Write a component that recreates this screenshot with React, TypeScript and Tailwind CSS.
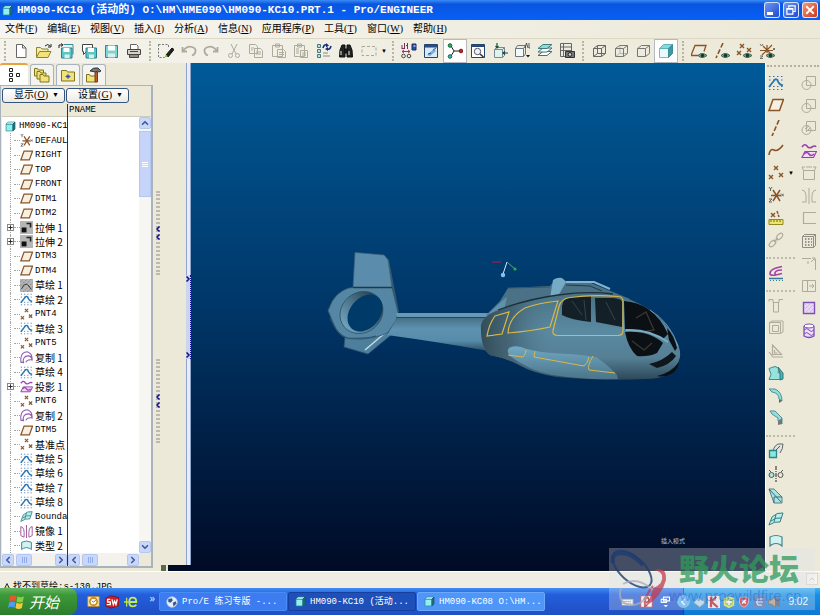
import type { ReactNode } from 'react';
import { ChevronDown, ChevronLeft, ChevronRight, ChevronUp } from 'lucide-react';

/* ---------- icons ---------- */

function Ico({ children, className = 'size-4' }: { children: ReactNode; className?: string }) {
  return (
    <svg viewBox="0 0 16 16" className={`${className} shrink-0`} fill="none" stroke="#444" strokeWidth="1" aria-hidden="true">
      {children}
    </svg>
  );
}

const GREY = '#aeab9c';
const BROWN = '#8a5426';

const Eye = () => (
  <g>
    <path d="M7 12.5q4-4 9 0q-5 4-9 0z" fill="#7fa893" stroke="#3f5f50" />
    <circle cx="11.5" cy="12.5" r="1.8" fill="#123a2c" stroke="none" />
  </g>
);
const Cross = ({ x, y, c = BROWN }: { x: number; y: number; c?: string }) => (
  <path d={`M${x - 2} ${y - 2}l4 4m0-4l-4 4`} stroke={c} strokeWidth="1.4" />
);
const Floppy = ({ x = 0, y = 0 }: { x?: number; y?: number }) => (
  <g transform={`translate(${x} ${y})`}>
    <path d="M.5.5h10.500v10H.5z" fill="#5cc6c6" stroke="#2f7f86" />
    <path d="M2.500.5h6v4h-6z" fill="#fff" stroke="none" />
    <path d="M3.500 7h5v3.500h-5z" fill="#d8eef0" stroke="none" />
  </g>
);
const FolderShape = ({ x = 0, y = 0 }: { x?: number; y?: number }) => (
  <path transform={`translate(${x} ${y})`} d="M.5 1.500h3l1 1.500h5v6h-9z" fill="#f1e27a" stroke="#7d741f" />
);

const icons: Record<string, ReactNode> = {
  new: <path d="M3.500 1.500h6l3.500 3.500v9.500h-9.500zM9.500 1.500v3.500h3.500" fill="#fff" stroke="#666" />,
  open: <><path d="M.5 14V4.500h4l1.500 1.500h6v3" fill="#f6ecab" stroke="#8d8430" /><path d="M.5 14.500l3-6h11.500l-3 6z" fill="#f1e27a" stroke="#8d8430" /><path d="M9 3q3-3 5 0m1-2v3h-3" stroke="#222" /></>,
  openSession: <><path d="M5.500 1.500h9.500v10" fill="#dff3f4" stroke="#3a8c92" /><Floppy x={3} y={4.5} /><path d="M1 5V2h3M3 .5L5 2L3 3.500" stroke="#222" /></>,
  saveCopy: <><path d="M1.500 1.500h10v7h-6l-3 3v-3h-1z" fill="#fff" stroke="#444" /><Floppy x={4.5} y={4.5} /></>,
  save: <><path d="M2.500 2.500h12v12h-12z" fill="#7fd3d3" stroke="#2f8a90" /><path d="M5 2.500h7v5H5z" fill="#fff" stroke="none" /><path d="M5 10.500h7v4H5z" fill="#d8eef0" stroke="none" /></>,
  print: <><path d="M4.500 6V1.500h6l1.500 1.500v3" fill="#fff" stroke="#666" /><path d="M1.500 6.500h13v5h-13z" fill="#d5d2c4" /><path d="M3.500 11.500h9v3h-9z" fill="#8f8d84" /><path d="M4 8.500h8" /></>,
  edit: <><path d="M.5 1.500h10v3M.5 1.500v13h6" strokeDasharray="2 1.500" stroke="#777" /><path d="M8 12l6-7l2 1.500l-6 7.500z" fill="#222" stroke="#111" /><path d="M6.500 14.500l1.500-3l2 2z" fill="#7fc31c" stroke="none" /></>,
  undo: <path d="M1.500 4v4.500h4.500M2 8q4-5.500 9-4t3 6q-1 2-3 2.500" stroke={GREY} strokeWidth="1.800" />,
  redo: <path d="M14.500 4v4.500h-4.500M14 8q-4-5.500-9-4t-3 6q1 2 3 2.500" stroke={GREY} strokeWidth="1.800" />,
  cut: <g stroke={GREY}><path d="M5 1l5 10M11 1l-5 10" /><circle cx="4.500" cy="12.500" r="2" /><circle cx="11.500" cy="12.500" r="2" /></g>,
  copy: <g stroke={GREY}><path d="M1.500 1.500h6l2 2v7h-8zM6.500 5.500h6l2 2v7h-8zM3 5h3M3 7h2M8 9h5M8 11h5" /></g>,
  paste: <g stroke={GREY}><path d="M1.500 2.500h10v11h-10zM4.500 1h4v3h-4zM6.500 6.500h6l2 2v6h-8zM8 9.500h5M8 11.500h5" /></g>,
  pasteSpecial: <g stroke={GREY}><path d="M1.500 2.500h10v11h-10zM4.500 1h4v3h-4zM7.500 7.500h7v7h-7zM9 10h4M9 12h4" /><path d="M3 6h3M3 8h3M3 10h3" /></g>,
  regen: <><path d="M1.500 1.500h3v3h-3zM1.500 6.500h3v3h-3zM1.500 11.500h3v3h-3z" fill="#bfe0e0" stroke="#47777d" /><path d="M7 13h7M7 10h5" stroke="#888" /><path d="M7 5q1-4 4-3M15 3q-1 4-4 3" stroke="#1c2d80" strokeWidth="1.600" /><path d="M10 0l3 2.500l-3 2zM12 4l-3 2l3 2z" fill="#1c2d80" stroke="none" /></>,
  find: <><path d="M2 7l2-5h3v12H1.500zM14 7l-2-5H9v12h5.500zM6.500 6h3v4h-3z" fill="#222" stroke="#111" /><path d="M3 8v4M11 8v4" stroke="#a9a99a" strokeWidth="1.500" /></>,
  select: <path d="M1 3.500h14v9H1z" stroke="#aaa796" strokeDasharray="3 2" />,
  dims: <><path d="M1 2v4M3.500 0v6M1 5.500h2.500M5 2.500h1.500M6.500 0v6" stroke="#7b2f5c" /><path d="M1 8.500h8M3 7l-2 1.500L3 10M7 7l2 1.500L7 10" stroke="#a3326f" /><circle cx="2.500" cy="13" r="1.800" /><circle cx="8" cy="13" r="1.800" /><path d="M11 1h4v6h-4z" fill="#2b4da0" stroke="#15306e" /><path d="M12.500 3h2" stroke="#fff" /></>,
  repaint: <><path d="M1.500 1.500h13v13h-13z" fill="#dbe9f9" stroke="#24456f" /><path d="M1.500 2h13v2h-13z" fill="#2c5b9c" stroke="#24456f" /><path d="M4 12l7-6l2 2l-6 5z" fill="#79aee2" stroke="none" /><path d="M5 11l3-1M10 7l3-2" stroke="#274e86" /></>,
  spin: <><path d="M4 3l3 5l-3 5M7 8h6" stroke="#222" /><circle cx="3" cy="2.500" r="1.800" fill="#2fae60" stroke="#146433" /><circle cx="3" cy="13.500" r="1.800" fill="#37b7a7" stroke="#146460" /><circle cx="14" cy="8" r="1.800" fill="#c92626" stroke="#801010" /></>,
  orient: <><path d="M1.500 1.500h13v13h-13z" fill="#fff" stroke="#24456f" /><path d="M1.500 2h13v1.500h-13z" fill="#2c5b9c" stroke="#24456f" /><circle cx="7.500" cy="8.500" r="3.200" fill="#eef4f7" stroke="#556" /><path d="M10 11l3.500 3" stroke="#333" strokeWidth="1.600" /></>,
  refit: <><path d="M2.500 6.500h8v8h-8z" fill="#dff3ee" stroke="#789" /><path d="M2.500 6.500l2-2h8l-2 2M12.500 4.500v8l-2 2" stroke="#789" /><path d="M5 0v5M3.500 3L5 5l1.500-2M16 10h-5M13 8.500L11 10l2 1.500" stroke="#14513a" strokeWidth="1.200" /></>,
  views: <><path d="M1.500 5.500h8v8h-8z" fill="#f5faf6" stroke="#678" /><path d="M1.500 5.500l2-3h8l-2 3M11.500 3v8l-2 2.500" stroke="#678" /><path d="M11 5l1.500-5l1.500 5M15 0v5h2" stroke="#333" strokeWidth=".8" /><path d="M12 12h4l-2 2.500z" fill="#111" stroke="none" /></>,
  layers: <><path d="M1 12.500h9l5-4h-9z" fill="#fff" stroke="#4b6f70" /><path d="M1 9h9l5-4h-9z" fill="#fff" stroke="#4b6f70" /><path d="M1 5.500h9l5-4h-9z" fill="#8fdcd6" stroke="#3a7f7d" /></>,
  viewMgr: <><path d="M1.500.5h11v13h-11zM4.500.5v13M1.500 4h11M1.500 7.500h11" stroke="#666" /><path d="M6.500 8.500h9v6h-9z" fill="#777" stroke="#333" /><circle cx="11" cy="11.500" r="1.800" fill="#ddd" stroke="#222" /></>,
  wire: <path d="M2.500 5.500h8v8h-8zM6.500 2.500h8v8h-8zM2.500 5.500l4-3M10.500 5.500l4-3M2.500 13.500l4-3M10.500 13.500l4-3" stroke="#666" />,
  hidden: <><path d="M7 3v7.500h7M6.500 10.500l-4 3" stroke="#b5b3a6" /><path d="M2.500 5.500h8v8h-8zM2.500 5.500l4-3h8v8l-4 3M10.500 5.500l4-3" stroke="#777" /></>,
  noHidden: <path d="M2.500 5.500h8v8h-8zM2.500 5.500l4-3h8v8l-4 3M10.500 5.500l4-3" stroke="#777" />,
  shade: <><path d="M1.500 5.500h9v9h-9z" fill="#e8fbfa" stroke="#7fb9bb" /><path d="M1.500 5.500l4-4h9l-4 4z" fill="#7fdde0" stroke="#5fb5ba" /><path d="M10.500 5.500l4-4v9l-4 4z" fill="#3b9aa5" stroke="#3b8d99" /></>,
  planeEye: <><path d="M0 12.500l4-10h11l-2 6M0 12.500h7" stroke={BROWN} strokeWidth="1.300" /><Eye /></>,
  axisEye: <><path d="M9 0L2 15" stroke={BROWN} strokeWidth="1.600" strokeDasharray="5 2" /><Eye /></>,
  pointEye: <><Cross x={6} y={3} /><Cross x={3} y={10} /><Cross x={13} y={7} /><Eye /></>,
  csysEye: <><path d="M4 3l9 9M13 2L3 12M1 7.500h13M8 2v8" stroke={BROWN} strokeWidth="1.200" /><path d="M1 1l1.500 2L4 1M14 5l2 2m0-2l-2 2M1 13h3l-3 2.500h3" stroke="#555" strokeWidth=".8" /><Eye /></>,
  sketch: <><path d="M1 1.500h14M1 5h14M1 11.500h14M1 14.500h14" stroke="#3b6fb5" strokeDasharray="1.500 2.500" /><path d="M1 12L7 4.500q2-1 3 2t5 4" stroke="#2b78b4" strokeWidth="1.800" /></>,
  plane: <path d="M1 13.500L5 2.500h10.500l-4 11z" stroke={BROWN} strokeWidth="1.500" fill="#f6f0e2" />,
  axis: <path d="M11 0L4 16" stroke={BROWN} strokeWidth="1.600" strokeDasharray="5 2" />,
  curve: <path d="M1 13q1-7 5-5t9-5" stroke={BROWN} strokeWidth="1.600" />,
  points: <><Cross x={8} y={3} /><Cross x={3} y={12} /><Cross x={13} y={10} /></>,
  csys: <><path d="M5 3l7 11M12 3L5 14M3 8.500h10" stroke={BROWN} strokeWidth="1.500" /><path d="M1 0l1.500 2L4 0M2.500 2v2M13 6.500l3 3m0-3l-3 3M1 12h3l-3 3h3" stroke="#555" strokeWidth=".9" /></>,
  analysis: <><path d="M1 9.500h14v5H1z" fill="#eee46a" stroke="#8f8a22" /><path d="M3 10v2M6 10v2M9 10v2M12 10v2" stroke="#6d6a10" /><Cross x={5} y={5} /><path d="M9 1l2 6" stroke={BROWN} strokeWidth="1.500" strokeDasharray="3 1" /></>,
  link: <g stroke={GREY} strokeWidth="1.200"><ellipse cx="4.500" cy="11.500" rx="4" ry="2.200" transform="rotate(-45 4.500 11.500)" /><ellipse cx="11.500" cy="4.500" rx="4" ry="2.200" transform="rotate(-45 11.500 4.500)" /><path d="M6 10l4-4" /></g>,
  style: <><path d="M14 1.500L8 3Q2 5 2 8.500t12 0M14 5Q6 5 7 9.500" stroke="#a544a8" strokeWidth="1.700" /><path d="M1 13.500h14" stroke="#33799a" strokeWidth="1.500" /><path d="M2 15.500h13" stroke="#33799a" strokeDasharray="1 2" /></>,
  tee: <path d="M1 1.500h4v3h6v-3h4M5.500 5v9h5V5M1 1.500v2" stroke={GREY} />,
  shell: <path d="M1.500 2.500h11v11h-11zM4.500 5.500h6v6h-6zM1.500 2.500L4 1h11v11l-2.500 1.500" stroke={GREY} />,
  rib: <path d="M4.500 2v9.500h9zM1 9l4 5h10M6.500 7v3h3" stroke={GREY} strokeWidth="1.200" />,
  draft: <><path d="M1 3.500l6-2q5 1 3 6l3 1v6H1l2-5z" fill="#98e2de" stroke="#3e8d8f" /><path d="M10 2l5 6v6l-3 1V8z" fill="#3fb7b3" stroke="#37777b" /></>,
  round: <><path d="M1 1h6q7 3 7 12l-3-2q0-6-7-7z" fill="#8fe0df" stroke="#4f9294" /><path d="M14 13l-3-2v4z" fill="#666" stroke="none" /></>,
  chamfer: <><path d="M2 1h5l7 7v6l-4-3V8L4 4z" fill="#8fe0df" stroke="#5b8d8d" /><path d="M14 8l-4 3v4l4-1z" fill="#777" stroke="none" /></>,
  extrude: <><path d="M5 7q2-5 5-6h5q0 5-3 9" fill="#dfe5e2" stroke="#666" /><path d="M1.500 7.500h7v7h-7z" fill="#8be6e2" stroke="#2c8588" strokeWidth="1.300" /><path d="M8 7l4-4" stroke="#a33" /></>,
  mirror: <><path d="M8 0v16" stroke="#222" strokeDasharray="4 1 1 1" /><circle cx="3.500" cy="9" r="2.500" fill="#a6e6e2" stroke="#555" /><circle cx="12.500" cy="9" r="2.500" stroke="#555" /><path d="M3 6L1 4M13 6l2-2" stroke="#555" /></>,
  sweep: <><path d="M1 1h5l8 8v6H6z" fill="#a9e5e0" stroke="#54808a" /><path d="M1 1l12 13M6 15V9h8" stroke="#3d6a80" /></>,
  boundary: <><path d="M1 14l3-8q5-5 11-4l-3 9q-5-1-11 3z" fill="#b7f0ec" stroke="#3a7c80" /><path d="M8 3.500L6 11M3 10q5-4 10-3" stroke="#3a7c80" /></>,
  surface: <path d="M2 13V4q6-3 12 0v9l-2-1.500q-4-2-8 0z" fill="#cdf3f3" stroke="#4a8290" strokeWidth="1.200" />,
  merge: <g stroke={GREY}><circle cx="5.500" cy="10" r="4.500" /><path d="M5.500 1.500h9v9h-9z" /></g>,
  merge2: <g stroke={GREY}><circle cx="5.500" cy="10" r="4.500" /><path d="M5.500 1.500h9v9h-9zM4 9l4-3M5 12l4-4" /></g>,
  project: <><path d="M1 14.500l3-6h11.500l-3 6z" fill="#f1dcf4" stroke="#9a3fb0" strokeWidth="1.200" /><path d="M1 4q3-4 5-1t5 1t4 0M3 11q3-3 5 0t5 0" stroke="#9a3fb0" strokeWidth="1.600" /></>,
  trim: <path d="M2.500 5.500h11v9h-11zM2.500 5.500L1 2h3M13.500 5.500L15 2h-3M5 2h6" stroke={GREY} />,
  mirrorGrey: <path d="M8 0v16M1 2q5 0 4 12H1M15 2q-5 0-4 12h4" stroke={GREY} />,
  corner: <path d="M15 2.500H2.500v11H15" stroke={GREY} strokeWidth="1.200" />,
  pattern: <><path d="M1.500 3.500l2-2h11v11l-2 2h-11zM1.500 3.500h11v11M12.500 3.500l2-2" stroke="#8f8d82" /><path d="M4 6h1.500M7 6h1.500M10 6h1M4 9h1.500M7 9h1.500M10 9h1M4 12h1.500M7 12h1.500M10 12h1" stroke="#777" strokeWidth="1.500" /></>,
  extend: <path d="M1 3.500h9M14.500 4v11M10 7l4-4M11 3h3v3M7 6v3" stroke={GREY} />,
  offset: <path d="M1.500 2.500h13v11h-13zM6.500 2.500v11M8 8h5M11 6l2 2l-2 2" stroke={GREY} />,
  fill: <><path d="M2.500 2.500h11v11h-11z" fill="#e9d7f7" stroke="#7b4fb5" strokeWidth="1.400" /><path d="M3 6l3-3M3 10l7-7M4 13l9-9M8 13l5-5" stroke="#d3b8ea" /></>,
  cylinder: <><path d="M3 3v10q5 3 10 0V3" fill="#eedcf8" stroke="#7b4fb5" strokeWidth="1.300" /><ellipse cx="8" cy="3" rx="5" ry="2" fill="#fff" stroke="#7b4fb5" /><path d="M3 7q3-3 5 0t5 0M3 11q3-3 5 0t5 0" stroke="#7b4fb5" /></>,
  cube: <><path d="M1.500 4.500h10v10h-10z" fill="#8ff0f0" stroke="#2b8a90" /><path d="M1.500 4.500l3-3h10l-3 3z" fill="#d5ffff" stroke="#2b8a90" /><path d="M11.500 4.500l3-3v10l-3 3z" fill="#1f7880" stroke="#145057" /></>,
  feature: <><path d="M0 0h16v16H0z" fill="#b5b5b5" stroke="none" /><path d="M2 8h6v6H2z" fill="#111" stroke="none" /><path d="M8 3h5v5" stroke="#222" strokeWidth="2" /></>,
  sketchGrey: <><path d="M0 0h16v16H0z" fill="#b5b5b5" stroke="none" /><path d="M0 4l4-4M0 9l9-9M0 14l14-14M4 16l12-12M9 16l7-7" stroke="#666" strokeDasharray="1.500 1.500" /><path d="M2 12q5-12 12 1" stroke="#222" /></>,
  copySurf: <path d="M1 14V9q1-8 8-8q6 2 6 9M4 15q-1-9 6-9q4 0 5 5q-6-1-8 3M1 14h4" stroke="#8f5bb0" strokeWidth="1.300" />,
  mirrorPurple: <path d="M8 0v16M1 2q5 0 4 13l-4-2zM15 2q-5 0-4 13l4-2z" stroke="#a05a9c" strokeWidth="1.200" />,
  treeTab: <path d="M3.500 1.500h3v3h-3zM3.500 6.500h3v3h-3zM3.500 11.500h3v3h-3zM10.500 6.500h3v3h-3z" stroke="#222" fill="#fff" />,
  foldersTab: <><FolderShape x={0} y={0} /><FolderShape x={2.5} y={3} /><FolderShape x={5.5} y={6} /></>,
  favTab: <><path d="M1.500 3.500h5l1 1.500h7v9h-13z" fill="#f1e27a" stroke="#7d741f" /><path d="M8 7v5M5.500 9.500h5M6.500 8l3 3M9.500 8l-3 3" stroke="#24389c" strokeWidth=".8" /></>,
  toolsTab: <><FolderShape x={0} y={6} /><path d="M4 4q3-4 8-3l3 3l-2 1l-2-1l-1 1z" fill="#6f7c86" stroke="#333" /><path d="M9 5v10h2.500V5z" fill="#b5622d" stroke="#7a3c15" /></>,
};

/* ---------- data ---------- */

const MENUS = [
  ['文件', 'F'], ['编辑', 'E'], ['视图', 'V'], ['插入', 'I'], ['分析', 'A'],
  ['信息', 'N'], ['应用程序', 'P'], ['工具', 'T'], ['窗口', 'W'], ['帮助', 'H'],
];

const TREE: [string, string, boolean?][] = [
  ['csys', 'DEFAULT'], ['plane', 'RIGHT'], ['plane', 'TOP'], ['plane', 'FRONT'], ['plane', 'DTM1'], ['plane', 'DTM2'],
  ['feature', '拉伸 1', true], ['feature', '拉伸 2', true], ['plane', 'DTM3'], ['plane', 'DTM4'],
  ['sketchGrey', '草绘 1'], ['sketch', '草绘 2'], ['points', 'PNT4'], ['sketch', '草绘 3'], ['points', 'PNT5'],
  ['copySurf', '复制 1'], ['sketch', '草绘 4'], ['project', '投影 1', true], ['points', 'PNT6'], ['copySurf', '复制 2'],
  ['plane', 'DTM5'], ['points', '基准点'], ['sketch', '草绘 5'], ['sketch', '草绘 6'], ['sketch', '草绘 7'], ['sketch', '草绘 8'],
  ['boundary', 'Boundary'], ['mirrorPurple', '镜像 1'], ['surface', '类型 2'],
];

const COL_A = [
  'sketch', 'plane', 'axis', 'curve', 'points', 'csys', 'analysis', 'link', '-', 'style', '-',
  'tee', 'shell', 'rib', 'draft', 'round', 'chamfer', '-', 'extrude', 'mirror', 'sweep', 'boundary', 'surface',
];
const COL_B = ['merge', 'merge', 'merge2', 'project', 'trim', 'mirrorGrey', 'corner', 'pattern', 'extend', 'offset', 'fill', 'cylinder'];

/* ---------- parts ---------- */

function TitleBar() {
  const btn = 'flex size-4 items-center justify-center rounded-[3px] border border-white/80';
  return (
    <header className="flex h-5 shrink-0 items-center bg-linear-to-b from-[#3a8cf5] via-[#0a55e0] via-20% to-[#0560f8] pr-0.5 pl-0.5 text-white">
      <Ico className="size-[11px]">{icons.cube}</Ico>
      <h1 className="ml-1 flex-1 truncate whitespace-pre font-['Liberation_Mono','Noto_Sans_CJK_SC',monospace] text-[11px] leading-4 font-bold">
        HM090-KC10 (活动的) O:\HM\HME090\HM090-KC10.PRT.1 - Pro/ENGINEER
      </h1>
      <div className="flex gap-[3px]">
        <button aria-label="最小化" className={`${btn} bg-linear-to-br from-[#6f98f2] to-[#1c48cf]`}>
          <span className="mt-1.5 mr-1 h-[3px] w-1.5 bg-white" />
        </button>
        <button aria-label="还原" className={`${btn} bg-linear-to-br from-[#6f98f2] to-[#1c48cf]`}>
          <Ico className="size-3"><path d="M5 5V2.500h8.500V10H11M2.500 6h8v7.500h-8zM2.500 7h8" stroke="#fff" strokeWidth="1.600" /></Ico>
        </button>
        <button aria-label="关闭" className={`${btn} bg-linear-to-br from-[#f0967a] to-[#c9361a]`}>
          <Ico className="size-3"><path d="M3 3l10 10M13 3L3 13" stroke="#fff" strokeWidth="2.400" /></Ico>
        </button>
      </div>
    </header>
  );
}

function MenuBar() {
  return (
    <nav className="flex h-[19px] shrink-0 items-center gap-2.5 border-b border-[#dcd8c4] bg-linear-to-r from-[#f6f5f1] to-[#ece9d8] pl-[5px] font-['Liberation_Serif','Noto_Sans_CJK_SC',serif] text-[10px] leading-4">
      {MENUS.map(([label, key]) => (
        <button key={key} className="shrink-0 whitespace-nowrap">{label}(<u>{key}</u>)</button>
      ))}
    </nav>
  );
}

const Grip = () => <span className="mx-1 h-5 w-0.5 shrink-0 border-l-2 border-dotted border-[#b9b5a3]" />;

function ToolGroup({ names, active, className }: { names: string[]; active?: string; className: string }) {
  return (
    <div className={`flex h-full shrink-0 ${className}`}>
      {names.map((n) => (
        <button key={n} aria-label={n} className={`flex h-full flex-1 items-center justify-center ${n === active ? 'border border-[#b5b9c4] bg-white' : ''}`}>
          <Ico>{icons[n]}</Ico>
        </button>
      ))}
    </div>
  );
}

function Toolbar() {
  return (
    <div className="flex h-6 shrink-0 items-center bg-linear-to-r from-[#f4f3ec] to-[#ece9d8]">
      <Grip />
      <ToolGroup className="w-[135px]" names={['new', 'open', 'openSession', 'saveCopy', 'save', 'print']} />
      <Grip />
      <ToolGroup className="w-[225px]" names={['edit', 'undo', 'redo', 'cut', 'copy', 'paste', 'pasteSpecial', 'regen', 'find', 'select']} />
      <button aria-label="选取选项" className="w-2 text-[6px] leading-4">▼</button>
      <Grip />
      <ToolGroup className="w-[180px]" active="spin" names={['dims', 'repaint', 'spin', 'orient', 'refit', 'views', 'layers', 'viewMgr']} />
      <Grip />
      <ToolGroup className="w-[90px]" active="shade" names={['wire', 'hidden', 'noHidden', 'shade']} />
      <Grip />
      <ToolGroup className="w-[90px]" names={['planeEye', 'axisEye', 'pointEye', 'csysEye']} />
    </div>
  );
}

const SCROLL_BTN = 'flex size-3 shrink-0 items-center justify-center rounded-[2px] border border-[#b4c7f3] bg-[#c9d7fb] text-[#3f5b93]';

function HScroll({ className }: { className: string }) {
  return (
    <div className={`flex h-[13px] shrink-0 items-center bg-[#f3f2ec] ${className}`}>
      <button aria-label="向左" className={SCROLL_BTN}><ChevronLeft size={10} strokeWidth={4} /></button>
      <span className="ml-0.5 flex h-3 w-4 items-center justify-center gap-px rounded-[2px] border border-[#b4c7f3] bg-[#c9d7fb]">
        <i className="h-1.5 w-px bg-[#8fabec]" /><i className="h-1.5 w-px bg-[#8fabec]" /><i className="h-1.5 w-px bg-[#8fabec]" />
      </span>
      <button aria-label="向右" className={`${SCROLL_BTN} ml-auto`}><ChevronRight size={10} strokeWidth={4} /></button>
    </div>
  );
}

function TreeLabel({ text }: { text: string }) {
  const cjk = /[\u4e00-\u9fff]/.test(text);
  return (
    <span className={cjk
      ? "whitespace-pre font-['Noto_Sans_CJK_SC',sans-serif] text-[10px] leading-[14px]"
      : "whitespace-pre font-['Liberation_Mono',monospace] text-[9px] leading-[14px]"}>
      {text}
    </span>
  );
}

function ModelTree() {
  return (
    <ul className="flex min-h-0 flex-1 flex-col overflow-hidden pt-0.5 text-black">
      <li className="flex min-h-0 flex-1 items-center gap-[3px] pl-[3px]">
        <Ico className="size-[11px]">{icons.cube}</Ico>
        <TreeLabel text="HM090-KC10" />
      </li>
      {TREE.map(([icon, label, open]) => (
        <li key={label} className="ml-2 flex min-h-0 flex-1 items-center border-l border-dotted border-[#a5a5a0]">
          {open ? (
            <button aria-label={`展开 ${label}`} className="-ml-1 flex size-[7px] shrink-0 items-center justify-center border border-[#8a8a8a] bg-white">
              <Ico className="size-[5px]"><path d="M8 1v14M1 8h14" stroke="#222" strokeWidth="3" /></Ico>
            </button>
          ) : <span className="w-[3px] shrink-0" />}
          <span className="w-1.5 shrink-0 border-t border-dotted border-[#a5a5a0]" />
          <Ico className="mr-0.5 size-[13px]">{icons[icon]}</Ico>
          <TreeLabel text={label} />
        </li>
      ))}
    </ul>
  );
}

function Navigator() {
  const tab = 'flex h-[21px] items-center justify-center rounded-t-[3px] border border-b-0 border-[#a9b3bd]';
  const drop = "flex h-[15px] w-[63px] items-center justify-center gap-1 rounded-[3px] border border-[#33557f] bg-linear-to-b from-white to-[#ecebe4] pl-1.5 font-['Liberation_Serif','Noto_Sans_CJK_SC',serif] text-[10px] leading-3 whitespace-nowrap";
  return (
    <aside className="mb-[3px] flex w-[153px] shrink-0 flex-col">
      <div className="flex items-end gap-0.5">
        <button aria-label="模型树" className="flex h-[22px] w-7 items-center justify-center rounded-t-[3px] border-t-2 border-[#e8a33d] bg-white"><Ico>{icons.treeTab}</Ico></button>
        <button aria-label="文件夹" className={`${tab} w-6 bg-[#f4f3ee]`}><Ico>{icons.foldersTab}</Ico></button>
        <button aria-label="收藏夹" className={`${tab} w-6 bg-[#f4f3ee]`}><Ico>{icons.favTab}</Ico></button>
        <button aria-label="工具" className={`${tab} w-6 bg-[#f4f3ee]`}><Ico>{icons.toolsTab}</Ico></button>
      </div>
      <div className="flex min-h-0 flex-1 flex-col border border-r-2 border-b-2 border-[#a9b3bd] pl-px">
        <div className="flex h-[18px] shrink-0 items-center gap-px">
          <button className={drop}><span>显示(<u>O</u>)</span><span className="text-[7px]">▼</span></button>
          <button className={drop}><span>设置(<u>G</u>)</span><span className="text-[7px]">▼</span></button>
        </div>
        <div className="flex min-h-0 flex-1">
          <section className="flex w-[66px] shrink-0 flex-col border-r border-[#26344f] bg-white">
            <div className="h-[13px] shrink-0 border-b border-[#cfccbb] bg-[#ece9d8]" />
            <ModelTree />
            <HScroll className="w-full" />
          </section>
          <section className="flex min-w-0 flex-1 flex-col bg-white">
            <div className="h-[13px] shrink-0 border-b border-[#cfccbb] bg-[#ece9d8] pl-px font-['Liberation_Mono',monospace] text-[9px] leading-3">PNAME</div>
            <div className="flex min-h-0 flex-1 justify-end">
              <div className="flex w-3 flex-col items-center bg-[#f7f6f2]">
                <button aria-label="向上" className={SCROLL_BTN}><ChevronUp size={10} strokeWidth={4} /></button>
                <span className="mt-0.5 flex h-[66px] w-full flex-col items-center justify-center gap-px border border-[#b4c7f3] bg-[#c6d4fa]">
                  <i className="h-px w-1.5 bg-white" /><i className="h-px w-1.5 bg-white" /><i className="h-px w-1.5 bg-white" />
                </span>
                <button aria-label="向下" className={`${SCROLL_BTN} mt-auto`}><ChevronDown size={10} strokeWidth={4} /></button>
              </div>
            </div>
            <div className="flex bg-[#ece9d8]">
              <HScroll className="mr-3 flex-1" />
            </div>
          </section>
        </div>
      </div>
    </aside>
  );
}

function Splitters() {
  return (
    <div className="flex w-[38px] shrink-0 flex-col">
      <div className="flex min-h-0 flex-1 justify-between">
        <div className="ml-[3px] flex flex-col items-center justify-center gap-[84px] pt-1.5">
          {[0, 1].map((i) => (
            <button key={i} aria-label="折叠" className="flex h-[84px] w-1 flex-col items-center justify-center border-x-2 border-dotted border-[#bdb9b0] text-[#10108c]">
              <ChevronLeft size={8} strokeWidth={5} className="shrink-0" />
              <ChevronLeft size={8} strokeWidth={5} className="shrink-0" />
            </button>
          ))}
        </div>
        <div className="flex w-[5px] flex-col items-center justify-center border-x border-[#8fa3cf] bg-[#e8ecf6] pt-1.5">
          <button aria-label="展开" className="flex h-[84px] w-[5px] flex-col items-center justify-between border-r border-dotted border-[#10108c] bg-[#cbd5ee] text-[#10108c]">
            <ChevronRight size={8} strokeWidth={5} className="shrink-0" />
            <ChevronRight size={8} strokeWidth={5} className="shrink-0" />
          </button>
        </div>
      </div>
      <div className="ml-2 flex h-1.5 shrink-0">
        <span className="w-[5px] bg-[#5c6a4c]" />
        <span className="ml-0.5 flex-1 bg-[#000c25]" />
      </div>
    </div>
  );
}

function Helicopter() {
  return (
    <svg viewBox="191 63 574 508" className="h-full w-full" fill="none" role="img" aria-label="HM090-KC10">
      <defs>
        <linearGradient id="body" x1="0" y1="0" x2="0" y2="1">
          <stop offset="0" stopColor="#4a7183" /><stop offset=".45" stopColor="#5a8aa1" /><stop offset=".75" stopColor="#557f95" /><stop offset="1" stopColor="#2c4858" />
        </linearGradient>
        <linearGradient id="rear" x1="0" y1="0" x2="1" y2="0">
          <stop offset="0" stopColor="#2f4650" stopOpacity=".9" /><stop offset=".4" stopColor="#3a5462" stopOpacity=".6" /><stop offset="1" stopColor="#5a8aa1" stopOpacity="0" />
        </linearGradient>
        <linearGradient id="boom" x1="0" y1="0" x2="0" y2="1">
          <stop offset="0" stopColor="#456c82" /><stop offset=".35" stopColor="#5e92b0" /><stop offset=".7" stopColor="#568ba9" /><stop offset="1" stopColor="#2d4e64" />
        </linearGradient>
        <linearGradient id="rim" x1="0" y1="0" x2="1" y2="0">
          <stop offset="0" stopColor="#70a3bd" /><stop offset="1" stopColor="#243f50" />
        </linearGradient>
        <linearGradient id="pod" x1="0" y1="0" x2="0" y2="1">
          <stop offset="0" stopColor="#72a9c3" /><stop offset="1" stopColor="#4a7489" />
        </linearGradient>
      </defs>

      {/* tail */}
      <path d="M384 255l5 5l10 52l-7-2z" fill="#32586d" />
      <path d="M355 252.500l29 2.500l4 5l4 28h-39z" fill="#5b8cab" stroke="#3c637b" strokeWidth=".7" />
      <path d="M345 337l-1 10l24 7l23-19l-6-4z" fill="#4d7f9d" stroke="#30536a" strokeWidth=".8" />
      <path d="M365 350l20-17" stroke="#c4dce8" strokeWidth="1.500" />
      <path d="M353 287.500h39l6 25l-2 8l-8 12q-6 3-14 5q-14 3-26 1q-8-3-13-11l-7-17l4-9q4-7 11-11q5-3 10-3z" fill="#5587a5" stroke="#31576d" strokeWidth=".8" />
      <path d="M353 287.500h39" stroke="#20384a" strokeWidth="1.300" />
      <path d="M330 318l6 11q5 8 12 9q18 1 28-2" stroke="#2e5268" strokeWidth="1.200" />
      <ellipse cx="361.500" cy="312.500" rx="22.500" ry="20" transform="rotate(-40 361.500 312.500)" fill="url(#rim)" stroke="#2e5268" strokeWidth=".8" />
      <ellipse cx="365" cy="313" rx="20.500" ry="15" transform="rotate(-50 365 313)" fill="#003a69" />

      {/* boom */}
      <path d="M397 317h92v34l-6-1q-45-8-96-15l9-15z" fill="url(#boom)" />
      <path d="M396 313h94l10-3v7h-103z" fill="#6699b6" />
      <path d="M397 317.500h92" stroke="#274557" strokeWidth="1.200" />

      {/* cowling */}
      <path d="M486 315l14-14l8-13l42-2l5-6l8-1l6 4h22l17 7l22 9l-60 12z" fill="#4b7186" />
      <path d="M487 315l16-15l4-3l-3 14z" fill="#5f91ad" />
      <path d="M553 280q4-3 9-2l4 4l-8 14l-8 2z" fill="#76abc5" />
      <path d="M566 282h28l16 7" stroke="#86b6cb" strokeWidth="2" />
      <path d="M566 285l24 1l12 5" stroke="#203b4b" strokeWidth="1" />
      <path d="M508 288l42-1" stroke="#35566a" />

      {/* fuselage */}
      <path d="M481 325q2-9 15-14q28-10 62-16q24-3 48-2q22 3 44 17q17 12 25 29q6 9 5 18q-2 11-13 18q-8 4-22 4q-40 2-88-2q-22-3-40-13q-12-6-27-9q-10-7-9-30z" fill="url(#body)" />
      <path d="M481 325q2-9 15-14q28-10 62-16v82q-26-4-41-13q-12-6-27-9q-10-7-9-30z" fill="url(#rear)" />
      <path d="M498 310q30-11 60-15q30-4 55-1" stroke="#1c2f3a" strokeWidth="1.300" />

      {/* sponson */}
      <path d="M509 348q4-3 12-1q10 4 30 6q28 1 45 4q12 8 21 18l1 4q-36 1-66-4q-24-5-42-19q-4-5-1-8z" fill="url(#pod)" />
      <path d="M508 355l15 2q3-3 3-7M535 351l-1 6l50 9q4-3 5-9M593 356q-6 10-4 14l26 3" stroke="#d9b84a" />

      {/* glazing */}
      <path d="M562 306q1-8 9-9l20-1v26q-20-2-29-7z" fill="#142027" />
      <path d="M595 298h19q8 1 8 4v25l-26-5z" fill="#142027" />
      <path d="M624 301q14 1 24 8q13 9 20 25l-5 5q-16-10-38-10z" fill="#0b1014" />
      <path d="M625 332q14-1 25 3q9 4 13 8l-6 10q-9 4-20 3q-9-8-12-24z" fill="#0b1014" />
      <path d="M649 364q14-3 23-12l4 4q-6 9-19 12z" fill="#10171c" />
      <path d="M667 328q7 7 10 20l-2 3l-6-11z" fill="#0b1014" />
      <path d="M657 376q14-3 22-14q-1 7-6 11q-8 5-16 3z" fill="#0b1014" />
      <path d="M636 318l10-6l8 18l-12 2M632 341l12 9l8-7" stroke="#3a3731" strokeWidth="1.300" />
      <path d="M572 301l10 14M606 302l9 18M584 300l2 20" stroke="#35444a" />
      <path d="M626 330q24-1 42 12" stroke="#7badc5" strokeWidth="2" />
      <path d="M650 310q20 12 28 36" stroke="#81aabd" strokeWidth=".8" />

      {/* feature curves */}
      <path d="M570 297.500q22-3 48-1q5 0 5 5v29q0 5-5 5h-60q-6 0-5-5l6-24q2-8 11-9z" stroke="#d9b84a" strokeWidth="1.200" />
      <path d="M495 316l14-4l-7 22l-15 2q2-12 8-20zM508 333q1-16 17-25q13-5 33-7l-8 26q-18 4-42 6z" stroke="#d9b84a" strokeWidth="1.200" />

      {/* orientation triad */}
      <path d="M507 262l-4 12" stroke="#dbe9f2" /><path d="M507 262l8 7" stroke="#47b564" />
      <circle cx="503" cy="275" r="2.200" fill="#8cbcf5" /><circle cx="515" cy="269" r="1.500" fill="#2cb34c" />
      <path d="M492 262h9" stroke="#7c2456" strokeWidth="1.500" />
    </svg>
  );
}

function FeatureBars() {
  const line = 'h-1 w-full border-b-2 border-dotted border-[#c0bcab]';
  return (
    <aside className="flex w-[55px] shrink-0 flex-col overflow-hidden border-l border-white bg-[#ece9d8]">
      <div className="mx-px mb-2 h-1 shrink-0 border-b-2 border-dotted border-[#b5b1a0]" />
      <div className="flex min-h-0 flex-1 pb-[22px]">
        <div className="flex w-[29px] flex-col items-start justify-between">
          {COL_A.map((n, i) => n === '-'
            ? <span key={i} className={line} />
            : (
              <button key={i} aria-label={n} className="ml-0.5 flex items-center">
                <Ico>{icons[n]}</Ico>
                {n === 'points' && <span className="ml-1 text-[6px] leading-none">▼</span>}
              </button>
            ))}
        </div>
        <div className="ml-1.5 flex h-[264px] flex-col justify-between">
          {COL_B.map((n, i) => <button key={i} aria-label={n}><Ico>{icons[n]}</Ico></button>)}
        </div>
      </div>
    </aside>
  );
}

function Task({ label, state, icon }: { label: string; state: string; icon: ReactNode }) {
  return (
    <button className={`flex h-[19px] w-32 min-w-0 shrink items-center gap-1 rounded-[2px] border pl-1.5 font-['Liberation_Mono','Noto_Sans_CJK_SC',monospace] text-[9px] leading-4 whitespace-pre text-white ${state}`}>
      {icon}{label}
    </button>
  );
}

function Taskbar() {
  return (
    <footer className="flex h-[27px] shrink-0 items-center bg-linear-to-b from-[#3f8cf3] via-[#245edb] via-25% to-[#1f4fc4]">
      <button className="flex h-full w-[77px] shrink-0 items-center gap-1 rounded-r-lg bg-linear-to-b from-[#69b565] via-[#3c9a3a] via-25% to-[#2c7d2b] pl-2 font-['Noto_Sans_CJK_SC',sans-serif] text-[15px] leading-5 text-white italic">
        <Ico className="size-[17px]">
          <g stroke="none">
            <path d="M2 3q3-2 6 0l-1 5q-3-2-6 0z" fill="#e8562a" /><path d="M9 3q3 2 6 0l-1 5q-3 2-6 0z" fill="#8ccf3b" />
            <path d="M1 9q3-2 6 0l-1 5q-3-2-6 0z" fill="#4a9df0" /><path d="M8 9q3 2 6 0l-1 5q-3 2-6 0z" fill="#f7c93a" />
          </g>
        </Ico>
        开始
      </button>
      <div className="ml-2.5 flex w-[72px] shrink-0 items-center gap-[5px]">
        <a href="#mail" aria-label="邮件"><Ico className="size-[13px]"><path d="M1 2h14v12H1z" fill="#f6edc4" stroke="#c08a20" /><circle cx="8" cy="8" r="4.500" fill="#fff" stroke="#c98912" strokeWidth="2" /><path d="M6 7l2 2l3-3" stroke="#555" /></Ico></a>
        <a href="#sw" aria-label="SolidWorks"><Ico className="size-[14px]"><path d="M0 4l7-3l9 2v9l-9 3l-7-3z" fill="#cf2027" stroke="#7c1015" /><path d="M6 5H3v3h3v3H2M8 5l1.500 6L11 7l1.500 4L14 5" stroke="#fff" strokeWidth="1.500" /></Ico></a>
        <a href="#browser" aria-label="浏览器"><Ico className="size-[14px]"><path d="M0 8h5M3 3v10" stroke="#b9e25a" strokeWidth="1.500" /><path d="M6 8h8q0-5-4-5T6 8t4 5q3 0 4-2" stroke="#c5ea4e" strokeWidth="2.200" /></Ico></a>
        <span className="mr-1 mb-2 ml-auto text-[11px] leading-none text-[#cfe0ff]">»</span>
      </div>
      <div className="flex min-w-0 flex-1 gap-px">
        <Task label="Pro/E 练习专版 -..." state="border-[#4a8cf5] bg-[#3c7cf0]" icon={<Ico className="size-3"><circle cx="8" cy="8" r="7" fill="#e6eef8" stroke="#b9cbe6" /><path d="M3 4l5-1l1 3l-3 3l-3-1zM9 9l4-2l1 3l-4 4z" fill="#35598f" stroke="none" /></Ico>} />
        <Task label="HM090-KC10 (活动..." state="border-[#163f9f] bg-[#1e50b9]" icon={<Ico className="size-[11px]">{icons.cube}</Ico>} />
        <Task label="HM090-KC08 O:\HM..." state="border-[#6aa9fb] bg-[#4f96f8]" icon={<Ico className="size-[11px]">{icons.cube}</Ico>} />
      </div>
      <div className="mr-3 flex shrink-0 items-center gap-1.5">
        <Ico className="size-[13px]"><path d="M1 5h14v8H1z" fill="#f3f3ee" stroke="#777" /><path d="M3 8h10M3 10.500h10" stroke="#666" strokeDasharray="1.500 1" /></Ico>
        <Ico className="size-[13px]"><path d="M1 1h14v14H1z" fill="#fff" stroke="#b22" /><path d="M5 6q0-3 3-3t3 3q0 2-3 3v1M8 12v2" stroke="#922" strokeWidth="2" /></Ico>
        <Ico className="size-3"><path d="M6 1.500h8v5H6zM3 4.500h7v4H3z" stroke="#fff" strokeWidth="1.500" /><path d="M6 12h6l-3 3z" fill="#fff" stroke="none" /></Ico>
      </div>
      <div className="flex h-full shrink-0 items-center gap-[3px] border-l border-[#1042af] bg-linear-to-b from-[#3fb3f5] via-[#1590e8] via-25% to-[#0f78d4] pr-3">
        <button aria-label="显示隐藏的图标" className="-ml-[7px] flex size-[13px] items-center justify-center rounded-full bg-[#5fb4f5] text-white"><ChevronLeft size={10} strokeWidth={3} /></button>
        <Ico className="size-3"><path d="M1 9l6-7l5 4l3-3v7l-6 5z" fill="#b7d7ec" stroke="#60809b" /></Ico>
        <Ico className="size-3"><path d="M0 0h16v16H0z" fill="#ececec" stroke="none" /><path d="M4 1v14M4 8l7-7M5 8l8 7" stroke="#c01f26" strokeWidth="3" /></Ico>
        <Ico className="size-3"><path d="M8 1l6 3v8l-6 3l-6-3V4z" fill="#8fc43e" stroke="#e4e34e" strokeWidth="2" /><path d="M8 4v8M4 8h8" stroke="#fff" strokeWidth="2" /></Ico>
        <Ico className="size-3"><path d="M8 1l6 2v6q-1 4-6 6q-5-2-6-6V3z" fill="#d42a2a" stroke="#f3bbbb" /><path d="M5.500 5l5 5m0-5l-5 5" stroke="#fff" strokeWidth="2" /></Ico>
        <Ico className="size-3"><path d="M0 0h16v16H0z" fill="#4a6fb0" stroke="none" /><path d="M14 4H7q-4 4 0 8h5M6 8h7" stroke="#e6eefa" strokeWidth="1.500" /></Ico>
        <Ico className="size-3"><path d="M1 5h4l5-4v14l-5-4H1z" fill="#b89b7a" stroke="#6a4b33" /><path d="M12 3v10M14.500 2v12" stroke="#7d3b2b" strokeWidth="1.500" /></Ico>
        <time className="ml-1.5 font-['Liberation_Sans',sans-serif] text-[10px] leading-4 text-white">9:02</time>
      </div>
    </footer>
  );
}

function Watermark() {
  return (
    <div className="pointer-events-none absolute right-[5px] bottom-[5px] flex h-[62px] w-[206px] bg-[#dfe3ee]/30">
      <svg viewBox="0 0 60 62" className="h-full w-[60px] shrink-0" fill="none" aria-hidden="true">
        <g stroke="#1f3c6e" strokeOpacity=".8">
          <ellipse cx="23" cy="21" rx="24" ry="12" transform="rotate(42 23 21)" strokeWidth="2" />
          <path d="M4 15Q2 5 13 5Q24 6 34 17" strokeWidth="4" />
        </g>
        <path d="M45 22Q58 18 57 32Q53 48 36 59Q42 50 44 40Q55 36 53 27Q51 23 45 22z" fill="#c43a4e" fillOpacity=".75" />
        <path d="M36 59Q34 50 44 38" stroke="#c43a4e" strokeOpacity=".75" strokeWidth="2" />
        <path d="M14 36Q28 28 44 42M12 40Q8 54 20 57Q32 58 38 48" stroke="#a9aebd" strokeOpacity=".75" strokeWidth="2" />
      </svg>
      <div className="flex flex-col">
        <span className="ml-2.5 font-['Noto_Sans_CJK_SC',sans-serif] text-[30px] leading-[38px] font-black whitespace-nowrap text-[#2f9a5c]/75">野火论坛</span>
        <span className="font-['Liberation_Sans',sans-serif] text-[15px] leading-5 whitespace-nowrap text-[#2a5fc4]/45">www.proewildfire.cn</span>
      </div>
    </div>
  );
}

export default function App() {
  return (
    <div className="relative flex h-screen flex-col overflow-hidden bg-[#ece9d8] text-black">
      <TitleBar />
      <MenuBar />
      <Toolbar />
      <main className="flex min-h-0 flex-1">
        <Navigator />
        <Splitters />
        <div className="relative min-w-0 flex-1 bg-linear-to-b from-[#005a98] via-[#003566] via-50% to-[#000b26]">
          <Helicopter />
          <span className="absolute right-20 bottom-[26px] font-['Noto_Sans_CJK_SC',sans-serif] text-[6px] leading-2 text-[#b9c0cf]">插入模式</span>
        </div>
        <FeatureBars />
      </main>
      <div className="flex h-[17px] shrink-0 items-start overflow-hidden border-t border-white bg-[#eeece3] pr-0.5 pl-[3px]">
        <p className="flex items-center gap-0.5 pt-[9px] font-['Liberation_Mono','Noto_Sans_CJK_SC',monospace] text-[9px] leading-3 whitespace-pre">
          <Ico className="size-2"><path d="M8 1l7 14H1z" fill="#d8dc4a" stroke="#333" strokeWidth="2" /></Ico>
          找不到草绘:s-130.JPG
        </p>
        <button aria-label="消息" className="mt-px ml-auto flex size-3 items-center justify-center border border-[#dcd9cb] bg-[#f5f4ee] text-[#c9c6b8]"><ChevronUp size={8} strokeWidth={3} /></button>
      </div>
      <Taskbar />
      <Watermark />
    </div>
  );
}
